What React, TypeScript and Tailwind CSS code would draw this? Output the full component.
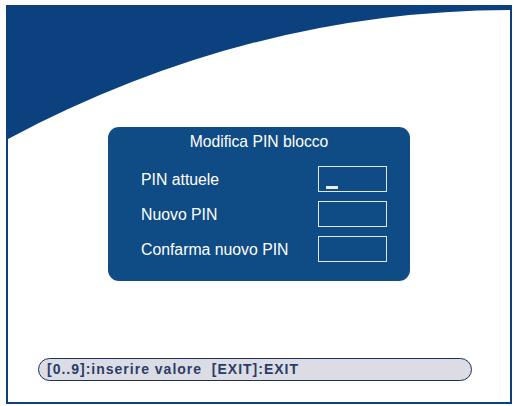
export default function App() {
  const rows = [
    { label: "PIN attuele", cursor: true },
    { label: "Nuovo PIN", cursor: false },
    { label: "Confarma nuovo PIN", cursor: false },
  ];

  return (
    <div className="w-[515px] h-[406px] bg-white pt-[5px] pl-[6px] font-['Liberation_Sans',Arial,sans-serif]">
      <div className="relative w-[506px] h-[399px] border-2 border-[#0c3f7b] bg-white overflow-hidden flex flex-col">
        {/* top swoosh */}
        <svg
          className="absolute left-0 top-0"
          width="502"
          height="395"
          viewBox="8 7 502 395"
        >
          <path d="M6,5 L512,5 L512,10 Q250,10 6,140 Z" fill="#0a417e" />
        </svg>

        {/* dialog */}
        <div className="relative ml-[100px] mt-[120px] w-[302px] h-[154px] rounded-[11px] bg-[#0f4b84] text-white pl-[33px] pr-[23px] pt-[5px]">
          <div className="text-center text-[15.7px] leading-[20px] -ml-[33px] -mr-[23px]">
            Modifica PIN blocco
          </div>
          <div className="mt-[14px] flex flex-col gap-[10px]">
            {rows.map((r) => (
              <div key={r.label} className="flex items-center justify-between h-[25px]">
                <span className="text-[15.8px] leading-none pt-[3px]">{r.label}</span>
                <div className="relative w-[69px] h-[26px] border-[1.5px] border-[#dfe7f0]">
                  {r.cursor && (
                    <div className="absolute left-[7px] bottom-[2px] w-[12px] h-[3px] bg-[#e8eef5]" />
                  )}
                </div>
              </div>
            ))}
          </div>
        </div>

        {/* help bar */}
        <div className="relative ml-[30px] mt-[77px] w-[434px] h-[23px] rounded-full border-[1.5px] border-[#1c2f5e] bg-[#dcdde4] flex items-center pl-[8px]">
          <span className="text-[14px] font-bold text-[#2b3c68] tracking-[1px] whitespace-pre">
            [0..9]:inserire valore  [EXIT]:EXIT
          </span>
        </div>
      </div>
    </div>
  );
}
